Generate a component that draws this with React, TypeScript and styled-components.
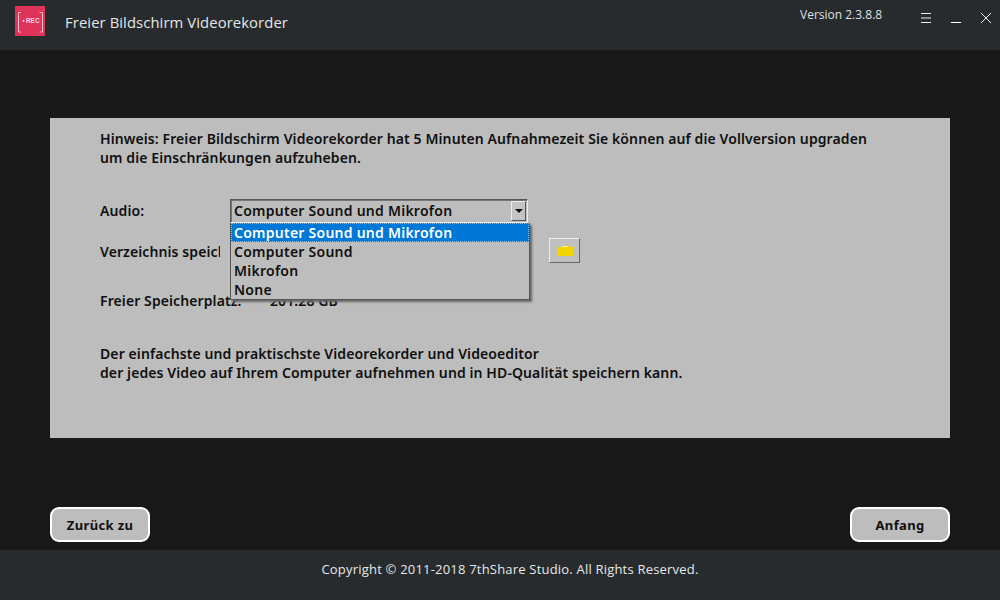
import React from "react";
import styled, { createGlobalStyle } from "styled-components";

const Global = createGlobalStyle`
  html, body { margin: 0; padding: 0; background: #181818; }
  body { font-family: "Noto Sans", "Open Sans", "Liberation Sans", sans-serif; }
`;
const Page = styled.div`
  width: 1000px; height: 600px; display: flex; flex-direction: column; overflow: hidden; background: #181818;
`;
const TitleBar = styled.header`
  height: 50px; flex: none; background: #272b2e; display: flex; align-items: flex-start; padding: 6px 0 0 15px; box-sizing: border-box;
`;
const Logo = styled.svg`width: 30px; height: 30px; flex: none;`;
const AppTitle = styled.div`
  margin-left: 20px; font-size: 14.8px; line-height: 33px; color: #e6e6e6; letter-spacing: 0.1px; flex: 1; font-family: "Open Sans", sans-serif;
`;
const Version = styled.div`
  font-size: 12px; line-height: 18px; color: #dde0e2; width: 120px; font-family: "Open Sans", sans-serif;
`;
const WinIcon = styled.svg`width: 12px; height: 12px; flex: none; margin-top: 6px; margin-right: 18px; &:last-child { margin-right: 8px; }`;
const Main = styled.main`
  flex: 1; display: flex; flex-direction: column; padding: 68px 50px 8px;
`;
const Panel = styled.section`
  height: 320px; flex: none; background: #bdbdbd; padding: 11px 50px; box-sizing: border-box; color: #101010; font-size: 14px; font-weight: 600; line-height: 19px; letter-spacing: 0.1px;
`;
const Para = styled.p<{ $top?: number }>`margin: ${p => p.$top ?? 0}px 0 0;`;
const Row = styled.div<{ $top: number }>`
  display: flex; align-items: center; margin-top: ${p => p.$top}px; height: 24px; position: relative;
`;
const Label = styled.div<{ $clip?: boolean }>`
  width: ${p => (p.$clip ? "120px" : "170px")}; margin-right: ${p => (p.$clip ? "10px" : "0")}; flex: none; white-space: nowrap; overflow: ${p => (p.$clip ? "hidden" : "visible")};
`;
const AudioLabel = styled.div`width: 130px; flex: none; padding-bottom: 2px;`;
const SelectBox = styled.div`
  width: 298px; height: 24px; flex: none; box-sizing: border-box; border: 1px solid; border-color: #555 #eee #eee #555; box-shadow: inset 1px 1px 0 #777; padding: 0 1px 0 3px; display: flex; align-items: center; justify-content: space-between; position: relative; z-index: 2; letter-spacing: 0.25px;
`;
const SelectText = styled.span`padding-bottom: 2px;`;
const Arrow = styled.div`
  width: 15px; height: 20px; background: #c4c4c4; border: 1px solid; border-color: #eee #555 #555 #eee; box-sizing: border-box; display: flex; align-items: center; justify-content: center;
  &::after { content: ""; border-left: 4px solid transparent; border-right: 4px solid transparent; border-top: 4px solid #111; }
`;
const Menu = styled.div`
  position: absolute; left: 130px; top: 24px; width: 300px; height: 77px; box-sizing: border-box; background: #bdbdbd; border: 1px solid #555; border-top: 0; box-shadow: 2px 2px 2px #666; z-index: 3; letter-spacing: 0.25px;
`;
const Option = styled.div<{ $active?: boolean }>`
  height: 19px; line-height: 19px; padding-left: 3px; color: ${p => (p.$active ? "#fff" : "#101010")}; background: ${p => (p.$active ? "#0078d7" : "transparent")};
  outline: ${p => (p.$active ? "1px dotted #8fb9dc" : "none")}; outline-offset: -1px;
`;
const FolderBtn = styled.button`
  position: absolute; left: 449px; top: -1px; width: 31px; height: 25px; padding: 0; background: #c0c0c0; border: 1px solid; border-color: #eee #666 #666 #eee; display: flex; align-items: center; justify-content: center;
`;
const Bottom = styled.div`margin-top: auto; display: flex; justify-content: space-between;`;
const RoundBtn = styled.button`
  width: 100px; height: 35px; box-sizing: border-box; background: #bdbdbd; border: 2px solid #fff; border-radius: 9px; font: 700 13px "Noto Sans", sans-serif; color: #101010; letter-spacing: 0.35px; padding: 0;
`;
const Footer = styled.footer`
  height: 50px; flex: none; box-sizing: border-box; background: #272b2e; color: #e8e8e8; display: flex; align-items: center; justify-content: center; padding: 0 0 12px 20px; font-size: 13px; letter-spacing: 0.2px; font-family: "Open Sans", sans-serif;
`;

export default function App() {
  return (
    <Page>
      <Global />
      <TitleBar>
        <Logo viewBox="0 0 30 30">
          <rect width="30" height="30" fill="#e0335a" />
          <path d="M6 6.5H3.5V26H6M24.5 6.5H27.5V26H24.5" stroke="#f0bccb" strokeWidth="1" fill="none" />
          <circle cx="8.5" cy="14.8" r="0.9" fill="#fff" />
          <text x="11" y="17.3" fontSize="6.4" fontWeight="700" fill="#f6dbe1" fontFamily="Liberation Sans">REC</text>
        </Logo>
        <AppTitle>Freier Bildschirm Videorekorder</AppTitle>
        <Version>Version 2.3.8.8</Version>
        <WinIcon viewBox="0 0 12 12"><path d="M1 1.5H11M1 6H11M1 10.5H11" stroke="#eee" strokeWidth="1" /></WinIcon>
        <WinIcon viewBox="0 0 12 12"><path d="M1 10.5H11" stroke="#fff" strokeWidth="1" /></WinIcon>
        <WinIcon viewBox="0 0 12 12"><path d="M1 1L11 11M11 1L1 11" stroke="#eee" strokeWidth="1" /></WinIcon>
      </TitleBar>
      <Main>
        <Panel>
          <Para>Hinweis: Freier Bildschirm Videorekorder hat 5 Minuten Aufnahmezeit Sie können auf die Vollversion upgraden</Para>
          <Para>um die Einschränkungen aufzuheben.</Para>
          <Row $top={32}>
            <AudioLabel>Audio:</AudioLabel>
            <SelectBox><SelectText>Computer Sound und Mikrofon</SelectText><Arrow /></SelectBox>
            <Menu>
              <Option $active>Computer Sound und Mikrofon</Option>
              <Option>Computer Sound</Option>
              <Option>Mikrofon</Option>
              <Option>None</Option>
            </Menu>
          </Row>
          <Row $top={16}>
            <Label $clip>Verzeichnis speichern:</Label>
            <FolderBtn aria-label="Ordner">
              <svg width="16" height="11" viewBox="0 0 16 11"><path d="M0 2H5L6 0.5H10L11 1.5H16V11H0Z" fill="#f2d600" /><path d="M6 1H10L11 2H5Z" fill="#f5f0c8" /></svg>
            </FolderBtn>
          </Row>
          <Row $top={25}>
            <Label>Freier Speicherplatz:</Label>
            <div>201.28 GB</div>
          </Row>
          <Para $top={32}>Der einfachste und praktischste Videorekorder und Videoeditor</Para>
          <Para>der jedes Video auf Ihrem Computer aufnehmen und in HD-Qualität speichern kann.</Para>
        </Panel>
        <Bottom>
          <RoundBtn>Zurück zu</RoundBtn>
          <RoundBtn>Anfang</RoundBtn>
        </Bottom>
      </Main>
      <Footer>Copyright © 2011-2018 7thShare Studio. All Rights Reserved.</Footer>
    </Page>
  );
}
